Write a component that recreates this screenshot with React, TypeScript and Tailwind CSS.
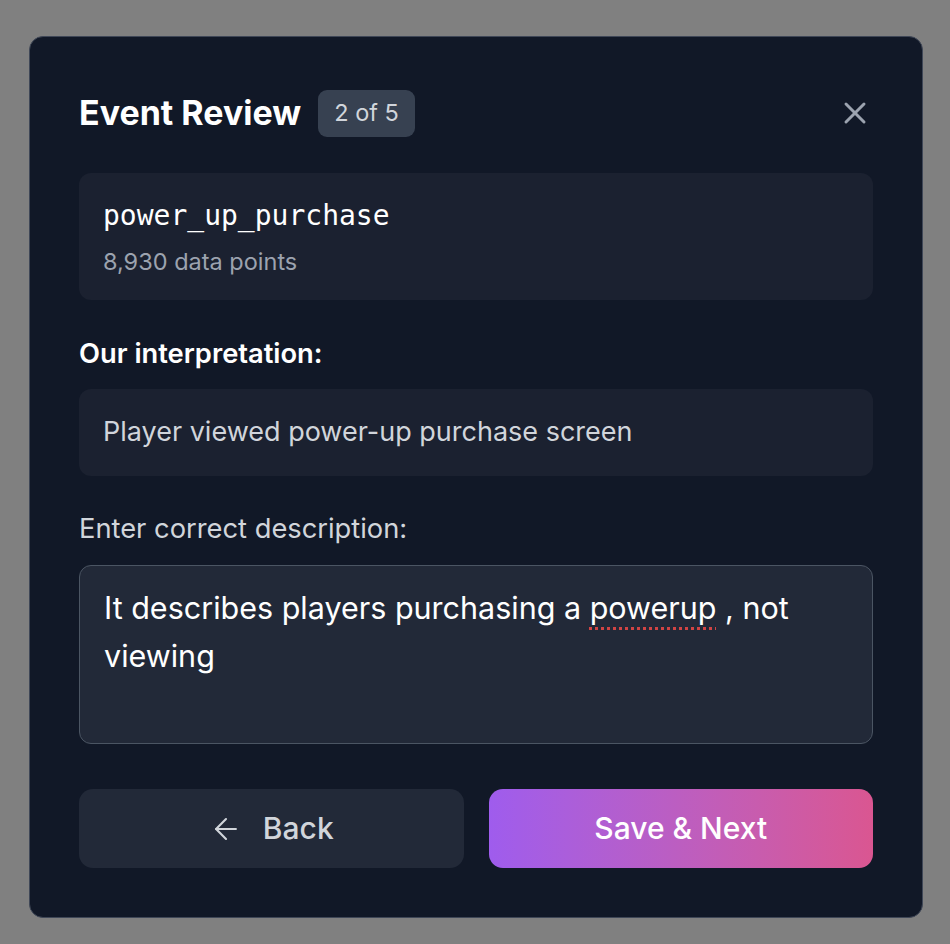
import { X, ArrowLeft } from "lucide-react";

export default function App() {
  return (
    <div className="min-h-[944px] w-full bg-[#808080] pt-[36px] pl-[29px] font-[Inter,'Noto_Sans',sans-serif]">
      <div className="w-[894px] rounded-[14px] border border-[#3f4757] bg-[#111827] p-[49px]">
        {/* Header */}
        <div className="flex h-[54px] items-center justify-between">
          <div className="flex items-center">
            <h2 className="text-[34px] font-bold leading-none text-white">Event Review</h2>
            <span className="ml-[17px] flex h-[47px] items-center rounded-[9px] bg-[#374151] px-[16px] text-[23.5px] text-[#d1d5db]">
              2 of 5
            </span>
          </div>
          <button className="flex h-[36px] w-[36px] items-center justify-center text-[#9ca3af]">
            <X size={36} strokeWidth={2} />
          </button>
        </div>

        {/* Event card */}
        <div className="mt-[33px] flex h-[127px] flex-col rounded-[12px] bg-[#1b2130] px-[24px] pt-[26px]">
          <div className="font-['DejaVu_Sans_Mono',monospace] text-[28px] leading-[34px] text-white">power_up_purchase</div>
          <div className="mt-[14px] text-[23.5px] leading-[30px] text-[#9ca3af]">8,930 data points</div>
        </div>

        {/* Interpretation */}
        <div className="mt-[39px] text-[27.3px] font-semibold leading-[30px] text-white">Our interpretation:</div>
        <div className="mt-[20px] flex h-[87px] items-center rounded-[12px] bg-[#1b2130] px-[24px] text-[27px] text-[#d1d5db]">
          Player viewed power-up purchase screen
        </div>

        {/* Correct description */}
        <div className="mt-[38px] text-[27.3px] leading-[30px] text-[#d1d5db]">Enter correct description:</div>
        <div className="mt-[21px] h-[179px] rounded-[12px] border border-[#4b5563] bg-[#222938] pl-[24px] pr-[20px] pt-[18px] text-[30.5px] leading-[48px] text-white">
          <span>It describes players purchasing a </span>
          <span className="underline decoration-[#d04444] decoration-dotted decoration-[3px] underline-offset-[8px]">powerup</span>
          <span> , not</span>
          <br />
          <span>viewing</span>
        </div>

        {/* Buttons */}
        <div className="mt-[45px] grid grid-cols-2 gap-[25px]">
          <button className="flex h-[79px] items-center justify-center gap-[20px] rounded-[14px] bg-[#222938] text-[30px] font-medium text-[#d1d5db]">
            <ArrowLeft size={34} strokeWidth={1.5} />
            <span>Back</span>
          </button>
          <button className="flex h-[79px] items-center justify-center rounded-[14px] bg-gradient-to-r from-[#9f5ced] to-[#da5691] text-[30px] font-medium text-white">
            Save &amp; Next
          </button>
        </div>
      </div>
    </div>
  );
}
